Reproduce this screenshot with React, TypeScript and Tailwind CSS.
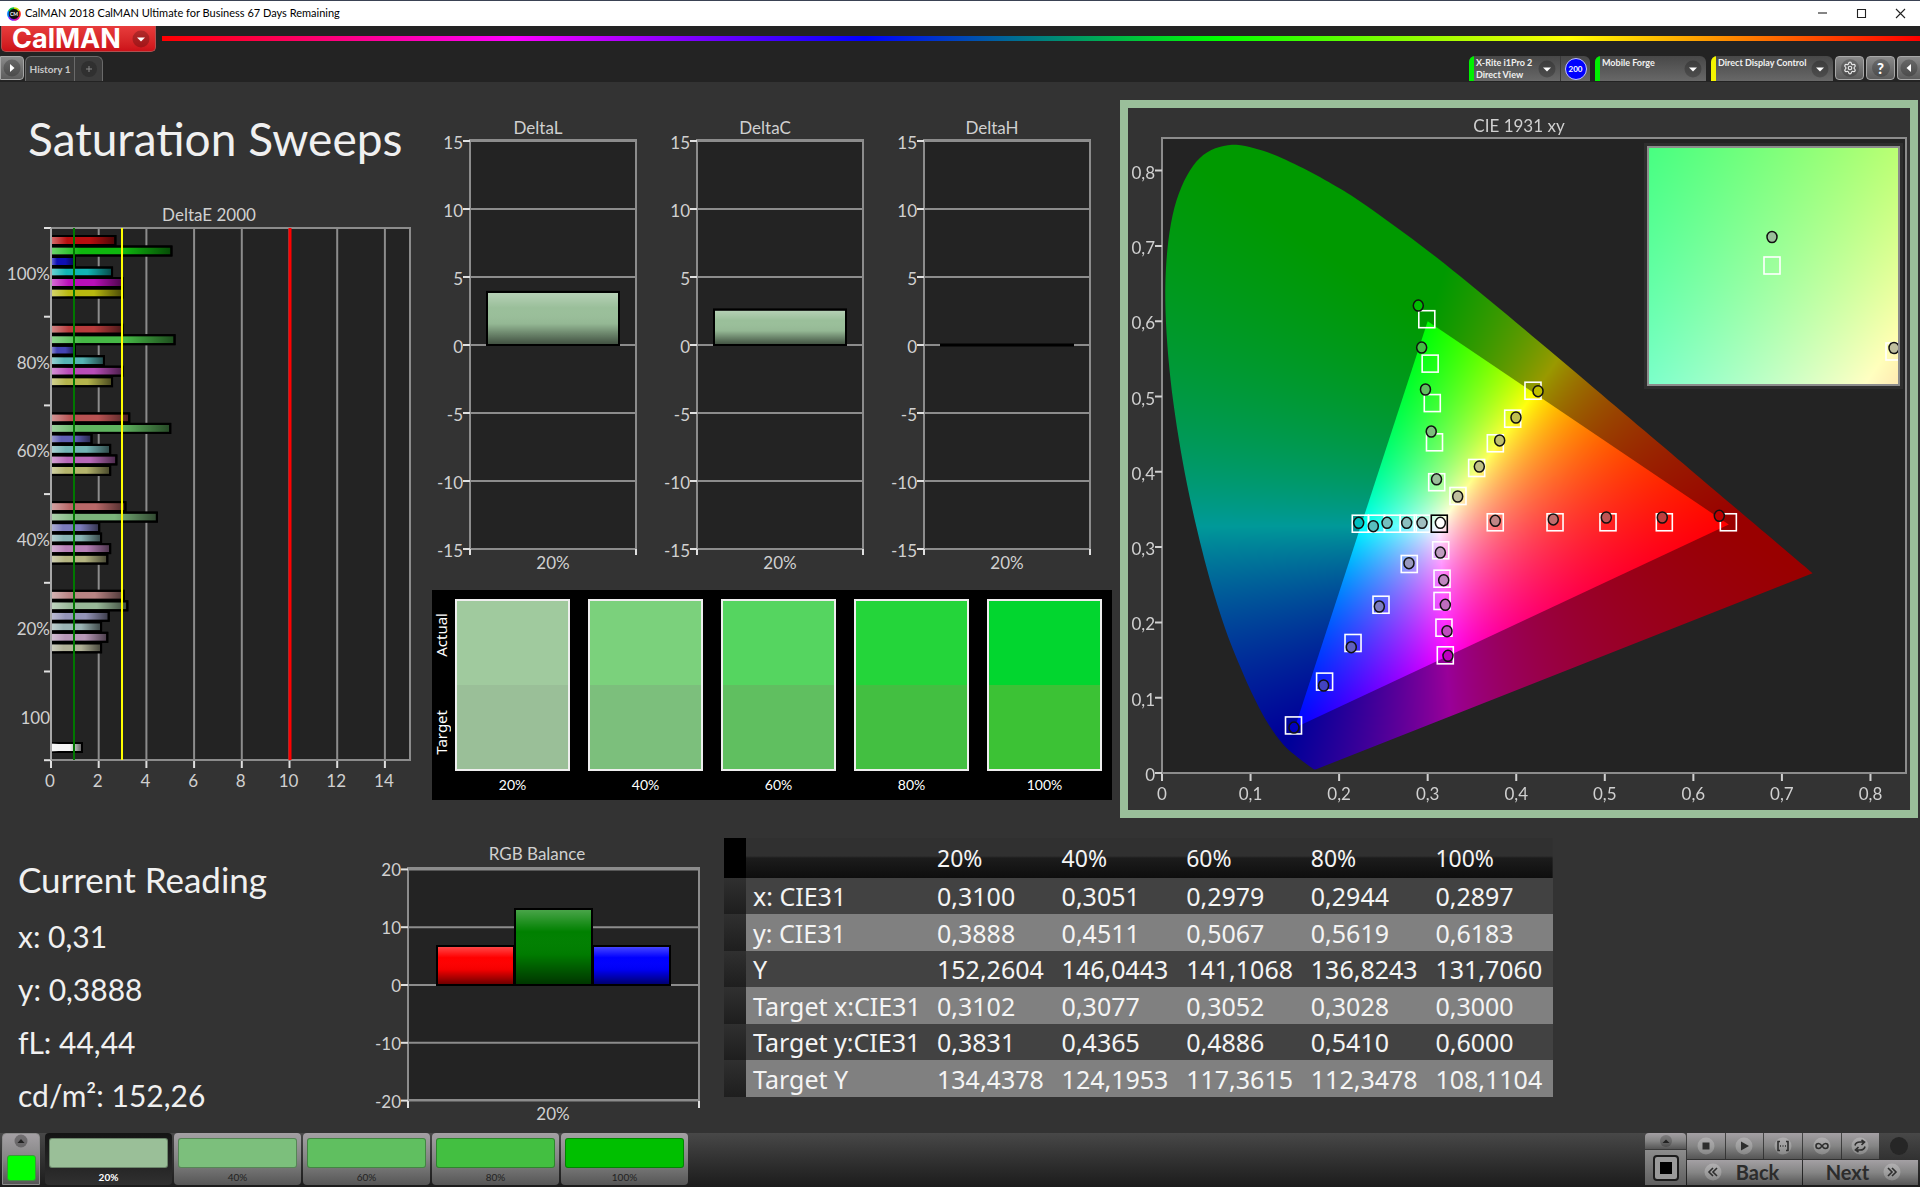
import { useEffect, useRef } from "react";
import type { ReactNode } from "react";
import { Settings } from "lucide-react";

const HUES = ["red", "green", "blue", "cyan", "magenta", "yellow"] as const;

const DELTA_E = [
  {
    label: "100%",
    values: [2.7, 5.05, 1.0, 2.56, 3.0, 3.0],
    colors: ["#b80f0f", "#0fb80f", "#0f0fb4", "#10b4b4", "#b80fb8", "#b8b80f"],
  },
  {
    label: "80%",
    values: [3.0, 5.18, 1.0, 2.22, 3.0, 2.56],
    colors: ["#b83c3c", "#46b846", "#4444b4", "#55b4b4", "#b84cb8", "#b4b44c"],
  },
  {
    label: "60%",
    values: [3.28, 5.0, 1.7, 2.48, 2.74, 2.48],
    colors: ["#b85252", "#5fb45f", "#5f5fb4", "#72b4b4", "#b868b8", "#b4b46c"],
  },
  {
    label: "40%",
    values: [3.12, 4.44, 2.02, 2.1, 2.48, 2.36],
    colors: ["#b86868", "#7ab47a", "#7c7cbc", "#88b4b4", "#b880b8", "#b4b480"],
  },
  {
    label: "20%",
    values: [3.06, 3.2, 2.42, 2.1, 2.36, 2.1],
    colors: ["#b88484", "#98b898", "#9494b8", "#9ab4b4", "#b898b8", "#b0b096"],
  },
];

const SWATCHES = [
  { label: "20%", actual: "#a0ca9e", target: "#9abf98" },
  { label: "40%", actual: "#7bd17c", target: "#7cbf7c" },
  { label: "60%", actual: "#55d560", target: "#60bf60" },
  { label: "80%", actual: "#24d53a", target: "#43bf41" },
  { label: "100%", actual: "#02d62f", target: "#3cc235" },
];

const LEVELS = [
  { label: "20%", color: "#9abf98" },
  { label: "40%", color: "#7cbf7c" },
  { label: "60%", color: "#60bf60" },
  { label: "80%", color: "#43bf41" },
  { label: "100%", color: "#00bf00" },
];

const TABLE_ROWS = [
  ["x: CIE31", "0,3100", "0,3051", "0,2979", "0,2944", "0,2897"],
  ["y: CIE31", "0,3888", "0,4511", "0,5067", "0,5619", "0,6183"],
  ["Y", "152,2604", "146,0443", "141,1068", "136,8243", "131,7060"],
  ["Target x:CIE31", "0,3102", "0,3077", "0,3052", "0,3028", "0,3000"],
  ["Target y:CIE31", "0,3831", "0,4365", "0,4886", "0,5410", "0,6000"],
  ["Target Y", "134,4378", "124,1953", "117,3615", "112,3478", "108,1104"],
];

type Point = [number, number];

// CIE 1931 2° spectral locus, 380nm to 700nm
const LOCUS: Point[] = [
  [0.1741, 0.005], [0.1714, 0.0051], [0.1644, 0.0109], [0.1566, 0.0177], [0.144, 0.0297], [0.1355, 0.0399],
  [0.1241, 0.0578], [0.1096, 0.0868], [0.0913, 0.1327], [0.0687, 0.2007], [0.0454, 0.295], [0.0235, 0.4127],
  [0.0082, 0.5384], [0.0039, 0.6548], [0.0139, 0.7502], [0.0389, 0.812], [0.0743, 0.8338], [0.1142, 0.8262],
  [0.1547, 0.8059], [0.1929, 0.7816], [0.2296, 0.7543], [0.3016, 0.6923], [0.3731, 0.6245], [0.4441, 0.5547],
  [0.5125, 0.4866], [0.5752, 0.4242], [0.627, 0.3725], [0.6658, 0.334], [0.6915, 0.3083], [0.7347, 0.2653],
];

const REC709: Point[] = [[0.64, 0.33], [0.3, 0.6], [0.15, 0.06]];

const TARGETS: Point[] = [
  [0.3763, 0.3323], [0.4438, 0.3323], [0.5036, 0.3323], [0.5672, 0.3323], [0.6395, 0.3323],
  [0.3102, 0.3855], [0.3077, 0.4385], [0.3052, 0.4906], [0.3028, 0.543], [0.299, 0.602],
  [0.2792, 0.2769], [0.2473, 0.2228], [0.2157, 0.172], [0.1836, 0.1207], [0.1485, 0.0625],
  [0.2939, 0.3304], [0.2781, 0.3304], [0.26, 0.3304], [0.2424, 0.3304], [0.2239, 0.3304],
  [0.3147, 0.2951], [0.3162, 0.2574], [0.3162, 0.2278], [0.3184, 0.1923], [0.3199, 0.1556],
  [0.3342, 0.3672], [0.3553, 0.4044], [0.3764, 0.4372], [0.396, 0.4699], [0.4189, 0.507],
];

const MEASURED: { hue: (typeof HUES)[number]; points: Point[]; colors: string[] }[] = [
  {
    hue: "red",
    points: [[0.3763, 0.3349], [0.4418, 0.3367], [0.5017, 0.3393], [0.5649, 0.3393], [0.6293, 0.3416]],
    colors: ["#bf8686", "#bf6c6c", "#bf5454", "#bf3e3e", "#bf0000"],
  },
  {
    hue: "green",
    points: [[0.31, 0.39], [0.304, 0.4535], [0.2975, 0.5093], [0.2932, 0.565], [0.2894, 0.6208]],
    colors: ["#9abf9a", "#7cbf7c", "#60bf60", "#43bf43", "#00bf00"],
  },
  {
    hue: "blue",
    points: [[0.2789, 0.2786], [0.2454, 0.2211], [0.2137, 0.1671], [0.1825, 0.1162], [0.149, 0.0604]],
    colors: ["#9898bf", "#7c7cbf", "#6060bf", "#4343bf", "#0000bf"],
  },
  {
    hue: "cyan",
    points: [[0.2936, 0.3323], [0.2763, 0.3323], [0.2541, 0.3323], [0.2386, 0.3278], [0.2221, 0.3323]],
    colors: ["#a0bfbf", "#8cbfbf", "#74bfbf", "#58bfbf", "#00bfbf"],
  },
  {
    hue: "magenta",
    points: [[0.3143, 0.2928], [0.3181, 0.2561], [0.3199, 0.2234], [0.3218, 0.1883], [0.3229, 0.1556]],
    colors: ["#bf9cbf", "#bf86bf", "#bf6cbf", "#bf4cbf", "#bf00bf"],
  },
  {
    hue: "yellow",
    points: [[0.3339, 0.3672], [0.3583, 0.407], [0.3813, 0.4416], [0.3997, 0.4721], [0.4246, 0.507]],
    colors: ["#bfbf9e", "#bfbf84", "#bfbf6c", "#bfbf4c", "#bfbf00"],
  },
];

const CIE_W = 782;
const CIE_H = 702;
const cieX = (x: number) => 34 + x * 885.6;
const cieY = (y: number) => 665 - y * 753;

const INSET = { x: 520, y: 39, w: 251, h: 238 };

// Catmull-Rom through the tabulated points
function smooth(points: Point[], steps = 8): Point[] {
  const out: Point[] = [];
  for (let i = 0; i < points.length - 1; i++) {
    const p0 = points[Math.max(0, i - 1)];
    const p1 = points[i];
    const p2 = points[i + 1];
    const p3 = points[Math.min(points.length - 1, i + 2)];
    for (let s = 0; s < steps; s++) {
      const t = s / steps;
      const at = (k: 0 | 1) =>
        0.5 *
        (2 * p1[k] +
          (p2[k] - p0[k]) * t +
          (2 * p0[k] - 5 * p1[k] + 4 * p2[k] - p3[k]) * t * t +
          (3 * p1[k] - p0[k] - 3 * p2[k] + p3[k]) * t * t * t);
      out.push([at(0), at(1)]);
    }
  }
  out.push(points[points.length - 1]);
  return out;
}

// Brightest in-range RGB (0..255) of a chromaticity
function xyToRgb(x: number, y: number, gain: number) {
  const X = x / y;
  const Z = (1 - x - y) / y;
  const r = Math.max(0, 3.2406 * X - 1.5372 - 0.4986 * Z);
  const g = Math.max(0, -0.9689 * X + 1.8758 + 0.0415 * Z);
  const b = Math.max(0, 0.0557 * X - 0.204 + 1.057 * Z);
  const k = (255 * gain) / Math.max(r, g, b);
  return [r * k, g * k, b * k];
}

function paintRegion(
  ctx: CanvasRenderingContext2D,
  outline: Point[],
  gain: number,
  toXy: (px: number, py: number) => Point
) {
  const layer = document.createElement("canvas");
  layer.width = CIE_W;
  layer.height = CIE_H;
  const layerCtx = layer.getContext("2d");
  if (!layerCtx) return;
  const image = layerCtx.createImageData(CIE_W, CIE_H);
  for (let py = 0; py < CIE_H; py++) {
    for (let px = 0; px < CIE_W; px++) {
      const [x, y] = toXy(px, py);
      const [r, g, b] = xyToRgb(x, Math.max(y, 0.001), gain);
      const i = (py * CIE_W + px) * 4;
      image.data[i] = r;
      image.data[i + 1] = g;
      image.data[i + 2] = b;
      image.data[i + 3] = 255;
    }
  }
  layerCtx.putImageData(image, 0, 0);
  ctx.save();
  ctx.beginPath();
  outline.forEach(([px, py]) => ctx.lineTo(px, py));
  ctx.closePath();
  ctx.clip();
  ctx.drawImage(layer, 0, 0);
  ctx.restore();
}

function GamutCanvas() {
  const ref = useRef<HTMLCanvasElement>(null);

  useEffect(() => {
    const ctx = ref.current?.getContext("2d");
    if (!ctx) return;
    const toXy = (px: number, py: number): Point => [(px - 34) / 885.6, (665 - py) / 753];
    const toPx = ([x, y]: Point): Point => [cieX(x), cieY(y)];
    ctx.fillStyle = "#232323";
    ctx.fillRect(34, 30, 744, 635);
    paintRegion(ctx, smooth(LOCUS).map(toPx), 0.6, toXy);
    paintRegion(ctx, REC709.map(toPx), 1, toXy);

    // magnified view around the 20% target
    const { x, y, w, h } = INSET;
    ctx.fillStyle = "#2e2e2e";
    ctx.fillRect(x - 4, y - 4, w + 8, h + 8);
    const corners: Point[] = [[x, y], [x + w, y], [x + w, y + h], [x, y + h]];
    paintRegion(ctx, corners, 1, (px, py) => [0.3102 + (px - 644) / 4900, 0.3831 - (py - 157) / 4400]);
  }, []);

  return <canvas ref={ref} width={CIE_W} height={CIE_H} className="col-start-1 row-start-1 w-full" />;
}

function Target({ x, y, color = "#fff" }: { x: number; y: number; color?: string }) {
  return <rect x={x - 8} y={y - 9} width="16" height="17" fill="none" stroke={color} strokeWidth="1.6" />;
}

function Reading({ x, y, color }: { x: number; y: number; color: string }) {
  return <ellipse cx={x} cy={y} rx="5" ry="5.5" fill={color} stroke="#111" strokeWidth="1.5" />;
}

function CieChart() {
  const ticks = [0, 1, 2, 3, 4, 5, 6, 7, 8];
  const { x, y, w, h } = INSET;
  return (
    <section className="mt-[18px] mr-[2px] grid self-start border-8 border-[#9abf9a] bg-[#333]">
      <GamutCanvas />
      <svg
        viewBox={`0 0 ${CIE_W} ${CIE_H}`}
        className="col-start-1 row-start-1 w-full fill-[#d0d0d0] text-[17px]"
        role="img"
        aria-label="CIE 1931 xy"
      >
        <text x="391" y="24" textAnchor="middle">CIE 1931 xy</text>
        <rect x="34" y="30" width="744" height="635" fill="none" stroke="#8c8c8c" strokeWidth="2" />
        {ticks.map((t) => (
          <g key={t}>
            <path d={`M${cieX(t / 10)} 666v7M27 ${cieY(t / 10)}h7`} stroke="#d0d0d0" strokeWidth="2" />
            <text x={cieX(t / 10)} y="692" textAnchor="middle">{t ? `0,${t}` : "0"}</text>
            <text x="27" y={cieY(t / 10) + 8} textAnchor="end">{t ? `0,${t}` : "0"}</text>
          </g>
        ))}
        {TARGETS.map(([tx, ty], i) => (
          <Target key={i} x={cieX(tx)} y={cieY(ty)} />
        ))}
        <Target x={cieX(0.3131)} y={cieY(0.3304)} color="#000" />
        <Reading x={cieX(0.3143)} y={cieY(0.3323)} color="#fff" />
        {MEASURED.map(({ hue, points, colors }) =>
          points.map(([mx, my], i) => <Reading key={hue + i} x={cieX(mx)} y={cieY(my)} color={colors[i]} />)
        )}
        <clipPath id="inset">
          <rect x={x} y={y} width={w} height={h} />
        </clipPath>
        <g clipPath="url(#inset)">
          <Target x={644} y={158} />
          <Reading x={644} y={129} color="#9abf9a" />
          <Target x={766} y={244} />
          <Reading x={766} y={240} color="#bfbf9e" />
        </g>
        <rect x={x} y={y} width={w} height={h} fill="none" stroke="#8c8c8c" strokeWidth="2" />
      </svg>
    </section>
  );
}

function DeltaEChart() {
  const px = (v: number) => 51 + v * 23.85;
  const groupH = 88.7;
  return (
    <svg viewBox="0 0 425 600" className="w-full fill-[#d0d0d0] text-[17px]" role="img" aria-label="DeltaE 2000">
      <defs>
        <linearGradient id="barShade">
          <stop offset="0" stopColor="#fff" stopOpacity=".4" />
          <stop offset=".25" stopColor="#fff" stopOpacity="0" />
          <stop offset=".6" stopColor="#000" stopOpacity="0" />
          <stop offset="1" stopColor="#000" stopOpacity=".6" />
        </linearGradient>
      </defs>
      <text x="209" y="21" textAnchor="middle">DeltaE 2000</text>
      <rect x="51" y="28" width="359" height="532" fill="#232323" stroke="#8c8c8c" strokeWidth="2" />
      {[0, 2, 4, 6, 8, 10, 12, 14].map((t) => (
        <g key={t}>
          <path d={`M${px(t)} 28v532`} stroke="#8c8c8c" strokeWidth="2" />
          <path d={`M${px(t)} 561v7`} stroke="#e0e0e0" strokeWidth="2" />
          <text x={px(t) - 1} y="587" textAnchor="middle">{t}</text>
        </g>
      ))}
      {[0, 1, 2, 3, 4, 5, 6].map((t) => (
        <path key={t} d={`M44 ${28 + t * groupH}h7`} stroke="#e0e0e0" strokeWidth="2" />
      ))}
      {DELTA_E.map((group, g) => (
        <g key={group.label}>
          <text x="50" y={80 + g * groupH} textAnchor="end">{group.label}</text>
          {group.values.map((v, i) => {
            const y = 36 + g * groupH + i * 10.5;
            return (
              <g key={HUES[i]} stroke="#000" strokeWidth="2">
                <rect x="51" y={y} width={v * 23.85} height="9" fill={group.colors[i]} />
                <rect x="51" y={y} width={v * 23.85} height="9" fill="url(#barShade)" />
              </g>
            );
          })}
        </g>
      ))}
      <text x="50" y="524" textAnchor="end">100</text>
      <rect x="51" y="543" width="31" height="9" fill="#f4f4f4" stroke="#000" strokeWidth="2" />
      <rect x="51" y="543" width="31" height="9" fill="url(#barShade)" />
      <path d={`M${px(0)} 28v532`} stroke="#a8a8a8" strokeWidth="2" />
      <path d="M74 28v532" stroke="#007800" strokeWidth="2" />
      <path d="M122 28v532" stroke="#ffff00" strokeWidth="2" />
      <path d="M290 28v532" stroke="#ff0000" strokeWidth="3" />
    </svg>
  );
}

function GlossDefs() {
  return (
    <defs>
      <linearGradient id="gloss" x2="0" y2="1">
        <stop offset="0" stopColor="#fff" stopOpacity=".3" />
        <stop offset=".3" stopColor="#fff" stopOpacity="0" />
        <stop offset=".6" stopColor="#000" stopOpacity="0.04" />
        <stop offset="1" stopColor="#000" stopOpacity=".6" />
      </linearGradient>
    </defs>
  );
}

function GlossBar({ x, y, width, height, color }: { x: number; y: number; width: number; height: number; color: string }) {
  if (height === 0) return <path d={`M${x - 1} ${y}h${width + 2}`} stroke="#000" strokeWidth="3" />;
  return (
    <g stroke="#000" strokeWidth="2">
      <rect x={x} y={y} width={width} height={height} fill={color} />
      <rect x={x} y={y} width={width} height={height} fill="url(#gloss)" />
    </g>
  );
}

function DeltaChart({ title, value }: { title: string; value: number }) {
  const py = (v: number) => 233 - v * 13.6;
  return (
    <svg viewBox="0 0 227 466" className="w-full fill-[#d0d0d0] text-[17px]" role="img" aria-label={title}>
      <GlossDefs />
      <text x="113" y="22" textAnchor="middle">{title}</text>
      <rect x="45" y="28" width="166" height="409" fill="#232323" stroke="#8c8c8c" strokeWidth="2" />
      {[15, 10, 5, 0, -5, -10, -15].map((t) => (
        <g key={t}>
          <path d={`M45 ${py(t)}h166`} stroke="#8c8c8c" strokeWidth="2" />
          <path d={`M38 ${py(t)}h7`} stroke="#e0e0e0" strokeWidth="2" />
          <text x="38" y={py(t) + 8} textAnchor="end">{t}</text>
        </g>
      ))}
      <path d="M45 437v6M211 437v6" stroke="#e0e0e0" strokeWidth="2" />
      <GlossBar x={62} y={py(value)} width={132} height={233 - py(value)} color="#9abf9a" />
      <text x="128" y="457" textAnchor="middle">20%</text>
    </svg>
  );
}

function RgbBalance() {
  const py = (v: number) => 145 - v * 5.78;
  return (
    <svg viewBox="0 0 354 290" className="w-full fill-[#d0d0d0] text-[17px]" role="img" aria-label="RGB Balance">
      <text x="167" y="20" textAnchor="middle">RGB Balance</text>
      <rect x="38" y="28" width="291" height="232" fill="#232323" stroke="#8c8c8c" strokeWidth="2" />
      {[20, 10, 0, -10, -20].map((t) => (
        <g key={t}>
          <path d={`M38 ${py(t)}h291`} stroke="#8c8c8c" strokeWidth="2" />
          <path d={`M31 ${py(t)}h7`} stroke="#e0e0e0" strokeWidth="2" />
          <text x="31" y={py(t) + 7} textAnchor="end">{t}</text>
        </g>
      ))}
      <path d="M38 261v7M329 261v7" stroke="#e0e0e0" strokeWidth="2" />
      <GlossBar x={67} y={106} width={77} height={39} color="#ff0000" />
      <GlossBar x={145} y={69} width={77} height={76} color="#008000" />
      <GlossBar x={223} y={106} width={77} height={39} color="#0000ff" />
      <text x="183" y="280" textAnchor="middle">20%</text>
    </svg>
  );
}

function SwatchPanel() {
  return (
    <section className="mt-3 mr-2 ml-[7px] flex gap-2 bg-black pt-[9px] pr-[10px] pb-[7px] text-white">
      <div className="flex w-[15px] flex-col justify-between pt-[14px] pb-[38px] pl-1 font-['Noto_Sans',sans-serif] text-[15px] leading-[15px]">
        <span className="rotate-180 self-center [writing-mode:vertical-rl]">Actual</span>
        <span className="rotate-180 self-center [writing-mode:vertical-rl]">Target</span>
      </div>
      <div className="grid flex-1 grid-cols-5 gap-[18px]">
        {SWATCHES.map(({ label, actual, target }) => (
          <figure key={label}>
            <div className="h-[172px] border-2 border-[#eee]">
              <div className="h-1/2" style={{ background: actual }} />
              <div className="h-1/2" style={{ background: target }} />
            </div>
            <figcaption className="mt-[5px] text-center text-[14px] leading-[17px]">{label}</figcaption>
          </figure>
        ))}
      </div>
    </section>
  );
}

function ReadingTable() {
  return (
    <table className="w-full table-fixed border-collapse text-left font-['Noto_Sans','Open_Sans',sans-serif] text-[25px] leading-8 text-[#f4f4f4]">
      <colgroup>
        <col className="w-[22px]" />
        <col className="w-[184px]" />
        <col span={5} />
      </colgroup>
      <thead>
        <tr className="h-[40px] bg-linear-to-b from-[#303030] from-45% via-[#1c1c1c] via-50% to-[#0e0e0e]">
          <td className="bg-black" />
          <td />
          {LEVELS.map(({ label }) => (
            <th key={label} scope="col" className="pl-[7px] text-[23px] font-normal">{label}</th>
          ))}
        </tr>
      </thead>
      <tbody>
        {TABLE_ROWS.map(([name, ...cells], i) => (
          <tr key={name} className={i % 2 ? "h-[37px] bg-[#808080]" : "h-[36px] bg-[#424242]"}>
            <td className="bg-linear-to-b from-[#303030] to-[#1e1e1e]" />
            <th scope="row" className="pl-[7px] font-normal whitespace-nowrap">{name}</th>
            {cells.map((cell, c) => (
              <td key={c} className="pl-[7px]">{cell}</td>
            ))}
          </tr>
        ))}
      </tbody>
    </table>
  );
}

function RoundArrow({ d }: { d: string }) {
  return (
    <svg viewBox="0 0 18 18" className="size-[18px] shrink-0">
      <circle cx="9" cy="9" r="8.5" fill="#000" fillOpacity=".22" />
      <path d={d} fill="#fff" />
    </svg>
  );
}

const ARROW_DOWN = "M5 7.5h8l-4 4z";

function DeviceTab({ accent, name, detail, width, children }: {
  accent: string;
  name: string;
  detail?: string;
  width: string;
  children?: ReactNode;
}) {
  return (
    <div className={`flex h-[25px] overflow-hidden rounded-t-md bg-linear-to-b from-[#484848] to-[#686868] ${width}`}>
      <span className={`w-[5px] shrink-0 ${accent}`} />
      <button className="flex flex-1 items-center justify-between pr-1 pl-[2px] text-left text-[9px] leading-[12px] font-bold text-[#f0f0f0]">
        <span className="self-start pt-px whitespace-nowrap">
          {name}
          {detail && <><br />{detail}</>}
        </span>
        <RoundArrow d={ARROW_DOWN} />
      </button>
      {children}
    </div>
  );
}

const SQUARE_BUTTON =
  "flex h-[24px] w-[29px] items-center justify-center rounded-[4px] border border-[#a8a8a8] bg-linear-to-b from-[#8a8a8a] to-[#5c5c5c]";

function TitleBar() {
  return (
    <header className="flex h-[26px] items-center border-t border-[#3a4254] bg-white pl-[7px] text-[11px] text-black">
      <svg viewBox="0 0 14 14" className="mr-1 size-[14px]">
        <circle cx="7" cy="7" r="6" fill="#111" />
        <g fill="none" strokeWidth="1.6">
          <path d="M7 1a6 6 0 0 1 5.200 3" stroke="#c8e000" />
          <path d="M12.200 4a6 6 0 0 1 0 6" stroke="#ff3020" />
          <path d="M12.200 10A6 6 0 0 1 7 13" stroke="#e010a0" />
          <path d="M7 13a6 6 0 0 1-5.200-3" stroke="#8020ff" />
          <path d="M1.800 10a6 6 0 0 1 0-6" stroke="#0080ff" />
          <path d="M1.800 4A6 6 0 0 1 7 1" stroke="#00c040" />
        </g>
        <text x="7" y="9" textAnchor="middle" fill="#fff" className="text-[5px] font-bold">CM</text>
      </svg>
      <h1>CalMAN 2018 CalMAN Ultimate for Business 67 Days Remaining</h1>
      <div className="ml-auto flex">
        {[
          ["Minimize", "M14 6h9"],
          ["Maximize", "M14.500 2.500h8v8h-8z"],
          ["Close", "M14 2l9 9M23 2l-9 9"],
        ].map(([label, d]) => (
          <button key={label} aria-label={label} className="flex w-[39px] justify-center">
            <svg viewBox="12 0 13 13" className="size-[13px]" fill="none" stroke="#222" strokeWidth="1.1">
              <path d={d} />
            </svg>
          </button>
        ))}
      </div>
    </header>
  );
}

function Toolbar() {
  return (
    <div className="bg-[#232323]">
      <div className="flex h-[30px] items-start">
        <button className="ml-px flex h-[26px] w-[155px] items-center justify-between rounded-b-[5px] border border-t-0 border-[#b05050] bg-linear-to-b from-[#e83c3c] to-[#cc1018] pr-[5px] pl-[10px] text-white">
          <span className="font-['Inter',sans-serif] text-[27px] leading-6 font-bold">CalMAN</span>
          <RoundArrow d={ARROW_DOWN} />
        </button>
        <div className="mt-[10px] ml-[6px] h-[5px] flex-1 bg-[linear-gradient(90deg,#f00,#f0f_20%,#00f_40%,#0f0_60%,#ff0_80%,#f00)]" />
      </div>
      <div className="flex h-[26px] items-start">
        <button aria-label="Show panel" className="flex h-[24px] w-[24px] items-center justify-center rounded-r-[4px] border border-[#a8a8a8] bg-linear-to-b from-[#8a8a8a] to-[#5c5c5c]">
          <RoundArrow d="M7 5v8l4.500-4z" />
        </button>
        <div className="ml-px flex h-[25px] rounded-t-md border border-b-0 border-[#6a6a6a] bg-[#3c3c3c] text-[10px] text-[#c8c8c8]">
          <button className="w-[49px] border-r border-[#6a6a6a] font-bold whitespace-nowrap">History 1</button>
          <button aria-label="Add history" className="flex w-[27px] items-center justify-center">
            <svg viewBox="0 0 18 18" className="size-[18px]">
              <circle cx="9" cy="9" r="8" fill="#303030" />
              <path d="M6 9h6M9 6v6" stroke="#888" />
            </svg>
          </button>
        </div>
        <div className="ml-auto flex gap-[5px]">
          <DeviceTab accent="bg-[#00f000]" name="X-Rite i1Pro 2" detail="Direct View" width="w-[121px]">
            <span className="flex w-[30px] items-center justify-center border-l border-[#3a3a3a]">
              <span className="flex size-[22px] items-center justify-center rounded-full border border-[#c0c0ff] bg-[#0000ff] text-[8px] font-bold text-white">200</span>
            </span>
          </DeviceTab>
          <DeviceTab accent="bg-[#00f000]" name="Mobile Forge" width="w-[111px]" />
          <DeviceTab accent="bg-[#f4f400]" name="Direct Display Control" width="w-[122px]" />
          <div className="-ml-[3px] flex gap-[2px]">
            <button aria-label="Settings" className={SQUARE_BUTTON}>
              <span className="rounded-full bg-black/20 p-[2px]">
                <Settings size={14} color="#e8e8e8" strokeWidth={2} />
              </span>
            </button>
            <button aria-label="Help" className={SQUARE_BUTTON}>
              <span className="size-[18px] rounded-full bg-black/20 text-[15px] leading-[18px] font-black text-white">?</span>
            </button>
            <button aria-label="Hide panel" className="flex h-[24px] w-[23px] items-center justify-center rounded-l-[4px] border border-r-0 border-[#a8a8a8] bg-linear-to-b from-[#8a8a8a] to-[#5c5c5c]">
              <RoundArrow d="M11 5v8L6.500 9z" />
            </button>
          </div>
        </div>
      </div>
    </div>
  );
}

const METAL = "bg-linear-to-b from-[#a4a0a4] via-[#858585] to-[#565656]";

function TransportIcon({ children }: { children: ReactNode }) {
  return (
    <svg viewBox="0 0 18 18" className="size-[18px]" fill="none" stroke="#2e2e2e" strokeWidth="1.6">
      <circle cx="9" cy="9" r="8.500" fill="#fff" fillOpacity=".22" stroke="none" />
      {children}
    </svg>
  );
}

function BottomBar() {
  const transport: [string, ReactNode][] = [
    ["Stop", <path key="i" d="M5.500 5.500h7v7h-7z" fill="#2e2e2e" stroke="none" />],
    ["Play", <path key="i" d="M6 4.500v9l8-4.500z" fill="#2e2e2e" stroke="none" />],
    ["Read series", <path key="i" d="M6 4.500H4v9h2M12 4.500h2v9h-2M6 9h1M8.500 9h1M11 9h1" />],
    ["Read continuous", <path key="i" d="M9 9c-1.500-2-2.500-2.500-3.500-2.500a2.500 2.500 0 0 0 0 5C6.500 11.500 7.500 11 9 9s2.500-2.500 3.500-2.500a2.500 2.500 0 0 1 0 5C11.500 11.500 10.500 11 9 9z" />],
    ["Repeat", <path key="i" d="M4 8.500c.5-2.500 2-3.500 5-3.500h3M10.500 3l3 2-3 3M14 9.500c-.5 2.500-2 3.500-5 3.500H6M7.500 15l-3-2 3-3" />],
  ];
  return (
    <footer className="flex h-[54px] bg-linear-to-b from-[#484848] to-[#1c1c1c] pr-[2px] pb-[2px] pl-[2px]">
      <button aria-label="Pattern window" className={`mr-[5px] flex w-[38px] flex-col items-center justify-between rounded-t-[4px] border border-[#8c8c8c] pb-[3px] ${METAL}`}>
        <svg viewBox="0 0 14 14" className="size-[14px]">
          <circle cx="7" cy="7" r="6.500" fill="#000" fillOpacity=".3" />
          <path d="M3.500 9h7L7 5z" fill="#222" />
        </svg>
        <span className="h-[26px] w-[29px] rounded-[3px] border border-[#3a9a3a] bg-[#00ff00]" />
      </button>
      <div className="flex gap-[2px]">
        {LEVELS.map(({ label, color }, i) => (
          <button
            key={label}
            className={`flex w-[127px] flex-col items-stretch rounded-[4px] px-1 pt-[5px] text-center text-[10px] leading-[14px] ${
              i === 0 ? "bg-linear-to-b from-[#141414] to-[#303030] font-bold text-white" : `text-[#222] ${METAL}`
            }`}
          >
            <span className="mb-[2px] h-[30px] rounded-[3px] border border-black/30" style={{ background: color }} />
            {label}
          </button>
        ))}
      </div>
      <div className="ml-auto flex w-[41px] flex-col">
        <button aria-label="Expand" className={`flex h-[16px] items-center justify-center rounded-t-[4px] ${METAL}`}>
          <svg viewBox="0 0 12 12" className="size-[12px]">
            <circle cx="6" cy="6" r="6" fill="#000" fillOpacity=".2" />
            <path d="M2.500 8h7L6 4.500z" fill="#222" />
          </svg>
        </button>
        <button aria-label="Read" className="mt-px flex flex-1 items-center justify-center bg-linear-to-b from-[#8c8c8c] to-[#606060]">
          <svg viewBox="0 0 26 26" className="size-[26px]">
            <rect x="1" y="1" width="24" height="24" rx="3" fill="#9a9a9a" stroke="#1c1c1c" strokeWidth="2" />
            <path d="M7 7h12v12H7z" fill="#000" />
          </svg>
        </button>
      </div>
      <div className="ml-px flex w-[231px] flex-col gap-px">
        <div className="grid flex-1 grid-cols-6 gap-px">
          {transport.map(([label, icon]) => (
            <button key={label} aria-label={label} className={`flex items-center justify-center ${METAL}`}>
              <TransportIcon>{icon}</TransportIcon>
            </button>
          ))}
          <span className="flex items-center justify-center">
            <span className="size-[18px] rounded-full bg-[#262626]" />
          </span>
        </div>
        <div className="grid flex-1 grid-cols-2 gap-px text-[20px] leading-6 font-bold text-[#2c2c2c]">
          <button className={`flex items-center justify-center gap-[14px] pr-[6px] ${METAL}`}>
            <TransportIcon><path d="M9 5L5 9l4 4M13 5L9 9l4 4" /></TransportIcon>
            Back
          </button>
          <button className={`flex items-center justify-center gap-[14px] pl-[6px] ${METAL}`}>
            Next
            <TransportIcon><path d="M5 5l4 4-4 4M9 5l4 4-4 4" /></TransportIcon>
          </button>
        </div>
      </div>
    </footer>
  );
}

export default function App() {
  return (
    <div className="flex min-h-screen flex-col bg-[#333] font-['Lato','Open_Sans',sans-serif]">
      <TitleBar />
      <Toolbar />
      <main className="flex-1">
        <div className="grid grid-cols-[425fr_695fr_800fr]">
          <div>
            <h2 className="flex h-[118px] items-center pb-[6px] pl-7 text-[46px] whitespace-nowrap text-[#f0f0f0]">Saturation Sweeps</h2>
            <DeltaEChart />
          </div>
          <div className="pt-[30px]">
            <div className="mr-[14px] grid grid-cols-3">
              <DeltaChart title="DeltaL" value={3.9} />
              <DeltaChart title="DeltaC" value={2.6} />
              <DeltaChart title="DeltaH" value={0} />
            </div>
            <SwatchPanel />
          </div>
          <CieChart />
        </div>
        <div className="grid grid-cols-[370fr_354fr_829fr_367fr] items-start pt-5">
          <div className="pt-[11px] pl-[18px] whitespace-nowrap text-[#f0f0f0]">
            <h3 className="text-[35px] leading-[61px]">Current Reading</h3>
            <div className="text-[30px] leading-[53px]">
              <p>x: 0,31</p>
              <p>y: 0,3888</p>
              <p>fL: 44,44</p>
              <p>cd/m²: 152,26</p>
            </div>
          </div>
          <div className="pt-[2px]">
            <RgbBalance />
          </div>
          <ReadingTable />
        </div>
      </main>
      <BottomBar />
    </div>
  );
}
